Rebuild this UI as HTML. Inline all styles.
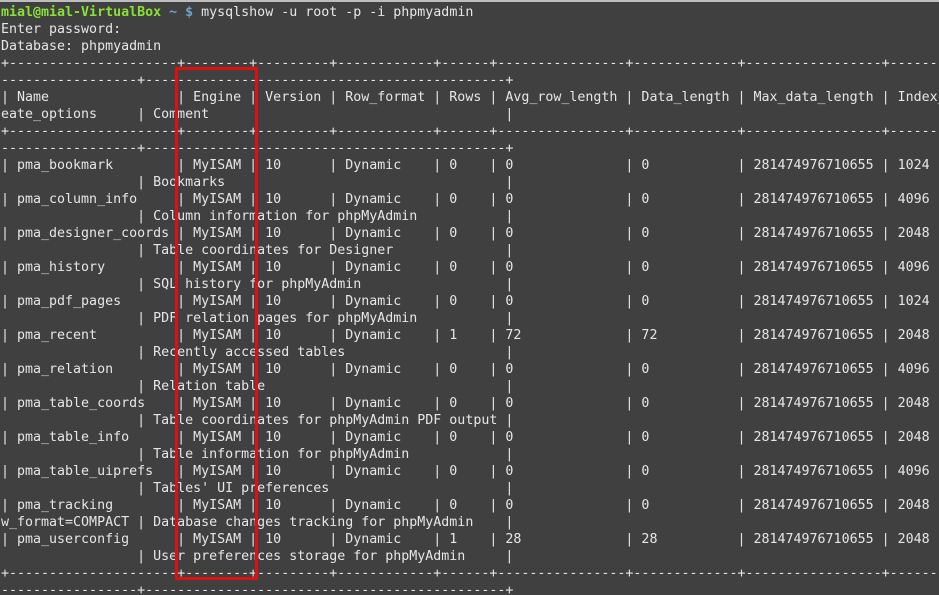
<!DOCTYPE html>
<html><head><meta charset="utf-8"><style>
html,body{margin:0;padding:0;width:939px;height:595px;overflow:hidden;background:#404040;position:relative}
.top{position:absolute;left:0;top:0;width:939px;height:2px;background:#bdbdbd}
pre{position:absolute;left:1px;top:4px;width:938px;height:591px;overflow:hidden;margin:0;font-family:"DejaVu Sans Mono","Liberation Mono",monospace;font-size:13.3px;line-height:17px;color:#e6e6e6;white-space:pre}
.g{color:#8ae234;font-weight:bold}.b{color:#729fcf;font-weight:bold}
.box{position:absolute;left:175px;top:67px;width:77px;height:507px;border:3px solid #e01010}
</style></head><body>
<div class="top"></div>
<pre><span class="g">mial@mial-VirtualBox</span><span class="b"> ~ $</span> mysqlshow -u root -p -i phpmyadmin
Enter password:
Database: phpmyadmin
+---------------------+--------+---------+------------+------+----------------+-------------+-----------------+----------
-----------------+---------------------------------------------+
| Name                | Engine | Version | Row_format | Rows | Avg_row_length | Data_length | Max_data_length | Index_length
eate_options     | Comment                                     |
+---------------------+--------+---------+------------+------+----------------+-------------+-----------------+----------
-----------------+---------------------------------------------+
| pma_bookmark        | MyISAM | 10      | Dynamic    | 0    | 0              | 0           | 281474976710655 | 1024
                 | Bookmarks                                   |
| pma_column_info     | MyISAM | 10      | Dynamic    | 0    | 0              | 0           | 281474976710655 | 4096
                 | Column information for phpMyAdmin           |
| pma_designer_coords | MyISAM | 10      | Dynamic    | 0    | 0              | 0           | 281474976710655 | 2048
                 | Table coordinates for Designer              |
| pma_history         | MyISAM | 10      | Dynamic    | 0    | 0              | 0           | 281474976710655 | 4096
                 | SQL history for phpMyAdmin                  |
| pma_pdf_pages       | MyISAM | 10      | Dynamic    | 0    | 0              | 0           | 281474976710655 | 1024
                 | PDF relation pages for phpMyAdmin           |
| pma_recent          | MyISAM | 10      | Dynamic    | 1    | 72             | 72          | 281474976710655 | 2048
                 | Recently accessed tables                    |
| pma_relation        | MyISAM | 10      | Dynamic    | 0    | 0              | 0           | 281474976710655 | 4096
                 | Relation table                              |
| pma_table_coords    | MyISAM | 10      | Dynamic    | 0    | 0              | 0           | 281474976710655 | 2048
                 | Table coordinates for phpMyAdmin PDF output |
| pma_table_info      | MyISAM | 10      | Dynamic    | 0    | 0              | 0           | 281474976710655 | 2048
                 | Table information for phpMyAdmin            |
| pma_table_uiprefs   | MyISAM | 10      | Dynamic    | 0    | 0              | 0           | 281474976710655 | 4096
                 | Tables' UI preferences                      |
| pma_tracking        | MyISAM | 10      | Dynamic    | 0    | 0              | 0           | 281474976710655 | 2048
w_format=COMPACT | Database changes tracking for phpMyAdmin    |
| pma_userconfig      | MyISAM | 10      | Dynamic    | 1    | 28             | 28          | 281474976710655 | 2048
                 | User preferences storage for phpMyAdmin     |
+---------------------+--------+---------+------------+------+----------------+-------------+-----------------+----------
-----------------+---------------------------------------------+</pre>
<div class="box"></div>
</body></html>
